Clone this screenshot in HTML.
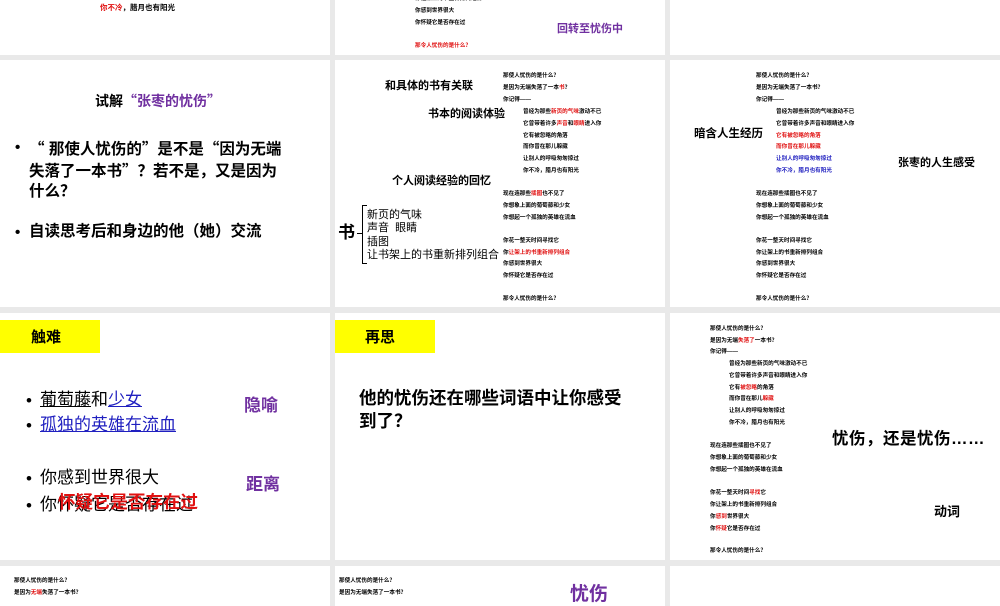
<!DOCTYPE html>
<html><head><meta charset="utf-8"><style>
*{margin:0;padding:0}
body{width:1000px;height:600px;background:#e9e9e9;position:relative;overflow:hidden;font-family:"Liberation Sans","Noto Sans CJK SC",sans-serif;font-weight:bold;color:#000}
.s{position:absolute;background:#fff;overflow:hidden}
.t{position:absolute;white-space:nowrap;line-height:1}
.sm{font-size:5.6px}
.r{color:#e01010}.p{color:#7030a0}.b{color:#2020c0}
.y{position:absolute;background:#ffff00}
.q{font-family:"Noto Sans CJK SC",sans-serif}
</style></head><body>
<!-- row1 -->
<div class="s" style="left:0;top:0;width:330px;height:55px">
<div class="t" style="left:100px;top:4px;font-size:7.5px"><span class="r">你不冷</span>，腊月也有阳光</div>
</div>
<div class="s" style="left:335px;top:0;width:330px;height:55px">
<div class="t sm" style="left:80px;top:-3px">你让架上的书重新排列组合</div>
<div class="t sm" style="left:80px;top:9px">你感到世界很大</div>
<div class="t sm" style="left:80px;top:21px">你怀疑它是否存在过</div>
<div class="t sm r" style="left:80px;top:44px">那令人忧伤的是什么？</div>
<div class="t p" style="left:222px;top:24px;font-size:11px">回转至忧伤中</div>
</div>
<div class="s" style="left:670px;top:0;width:330px;height:55px"></div>

<!-- row2 -->
<div class="s" style="left:0;top:60px;width:330px;height:247px">
<div class="t" style="left:95px;top:34px;font-size:14px">试解<span class="p"><span class="q">“</span>张枣的忧伤<span class="q">”</span></span></div>
<div class="t" style="left:15px;top:80px;font-size:15px">•</div>
<div class="t" style="left:29px;top:78px;font-size:15.5px;line-height:20px"><span class="q">“</span> 那使人忧伤的<span class="q">”</span>是不是<span class="q">“</span>因为无端<br>失落了一本书<span class="q">”</span>？若不是，又是因为<br>什么？</div>
<div class="t" style="left:15px;top:165px;font-size:15px">•</div>
<div class="t" style="left:29px;top:164px;font-size:15.5px">自读思考后和身边的他（她）交流</div>
</div>
<div class="s" style="left:335px;top:60px;width:330px;height:247px">
<div class="t" style="left:50px;top:21px;font-size:11px">和具体的书有关联</div>
<div class="t" style="left:93px;top:49px;font-size:11px">书本的阅读体验</div>
<div class="t" style="left:57px;top:116px;font-size:11px">个人阅读经验的回忆</div>
<div class="t" style="left:3px;top:164px;font-size:17px">书</div>
<div style="position:absolute;left:27px;top:145px;width:4px;height:57px;border:1.2px solid #000;border-right:none"></div>
<div style="position:absolute;left:22px;top:173px;width:5px;border-top:1.2px solid #000"></div>
<div class="t" style="left:32px;top:149px;font-size:11px;font-weight:normal;line-height:13.3px">新页的气味<br>声音&nbsp;&nbsp;眼睛<br>插图<br>让书架上的书重新排列组合</div>
<div class="t sm" style="left:168px;top:14px">那使人忧伤的是什么？</div>
<div class="t sm" style="left:168px;top:26px">是因为无端失落了一本<span class="r">书</span>？</div>
<div class="t sm" style="left:168px;top:38px">你记得——</div>
<div class="t sm" style="left:188px;top:50px">曾经为那些<span class="r">新页的气味</span>激动不已</div>
<div class="t sm" style="left:188px;top:62px">它曾带着许多<span class="r">声音</span>和<span class="r">眼睛</span>进入你</div>
<div class="t sm" style="left:188px;top:74px">它有被忽略的角落</div>
<div class="t sm" style="left:188px;top:85px">而你曾在那儿躲藏</div>
<div class="t sm" style="left:188px;top:97px">让别人的呼吸匆匆掠过</div>
<div class="t sm" style="left:188px;top:109px">你不冷，腊月也有阳光</div>
<div class="t sm" style="left:168px;top:132px">现在连那些<span class="r">插图</span>也不见了</div>
<div class="t sm" style="left:168px;top:144px">你想象上面的葡萄藤和少女</div>
<div class="t sm" style="left:168px;top:156px">你想起一个孤独的英雄在流血</div>
<div class="t sm" style="left:168px;top:179px">你花一整天时间寻找它</div>
<div class="t sm" style="left:168px;top:191px">你<span class="r">让架上的书重新排列组合</span></div>
<div class="t sm" style="left:168px;top:202px">你感到世界很大</div>
<div class="t sm" style="left:168px;top:214px">你怀疑它是否存在过</div>
<div class="t sm" style="left:168px;top:237px">那令人忧伤的是什么？</div>
</div>
<div class="s" style="left:670px;top:60px;width:330px;height:247px">
<div class="t" style="left:24px;top:69px;font-size:11.5px">暗含人生经历</div>
<div class="t" style="left:228px;top:98px;font-size:11px">张枣的人生感受</div>
<div class="t sm" style="left:86px;top:14px">那使人忧伤的是什么？</div>
<div class="t sm" style="left:86px;top:26px">是因为无端失落了一本书？</div>
<div class="t sm" style="left:86px;top:38px">你记得——</div>
<div class="t sm" style="left:106px;top:50px">曾经为那些新页的气味激动不已</div>
<div class="t sm" style="left:106px;top:62px">它曾带着许多声音和眼睛进入你</div>
<div class="t sm r" style="left:106px;top:74px">它有被忽略的角落</div>
<div class="t sm r" style="left:106px;top:85px">而你曾在那儿躲藏</div>
<div class="t sm b" style="left:106px;top:97px">让别人的呼吸匆匆掠过</div>
<div class="t sm b" style="left:106px;top:109px">你不冷，腊月也有阳光</div>
<div class="t sm" style="left:86px;top:132px">现在连那些插图也不见了</div>
<div class="t sm" style="left:86px;top:144px">你想象上面的葡萄藤和少女</div>
<div class="t sm" style="left:86px;top:156px">你想起一个孤独的英雄在流血</div>
<div class="t sm" style="left:86px;top:179px">你花一整天时间寻找它</div>
<div class="t sm" style="left:86px;top:191px">你让架上的书重新排列组合</div>
<div class="t sm" style="left:86px;top:202px">你感到世界很大</div>
<div class="t sm" style="left:86px;top:214px">你怀疑它是否存在过</div>
<div class="t sm" style="left:86px;top:237px">那令人忧伤的是什么？</div>
</div>

<!-- row3 -->
<div class="s" style="left:0;top:313px;width:330px;height:247px">
<div class="y" style="left:0;top:7px;width:100px;height:33px"></div>
<div class="t" style="left:31px;top:17px;font-size:15px">触难</div>
<div class="t" style="left:26px;top:75px;font-size:17px;font-weight:normal;line-height:25px">•<br>•</div>
<div class="t" style="left:40px;top:74px;font-size:17px;line-height:25px;font-weight:normal"><u>葡萄藤</u>和<u class="b">少女</u><br><u class="b">孤独的英雄在流血</u></div>
<div class="t" style="left:26px;top:152px;font-size:17px;font-weight:normal;line-height:27px">•<br>•</div>
<div class="t" style="left:40px;top:151px;font-size:17px;line-height:27px;font-weight:normal">你感到世界很大<br>你怀疑它是否存在过</div>
<div class="t r" style="left:58px;top:181px;font-size:17.5px">怀疑它是否存在过</div>
<div class="t p" style="left:244px;top:84px;font-size:17px">隐喻</div>
<div class="t p" style="left:246px;top:163px;font-size:17px">距离</div>
</div>
<div class="s" style="left:335px;top:313px;width:330px;height:247px">
<div class="y" style="left:0;top:7px;width:100px;height:33px"></div>
<div class="t" style="left:30px;top:17px;font-size:15px">再思</div>
<div class="t" style="left:24px;top:74px;font-size:17.5px;line-height:23px">他的忧伤还在哪些词语中让你感受<br>到了？</div>
</div>
<div class="s" style="left:670px;top:313px;width:330px;height:247px">
<div class="t" style="left:162px;top:118px;font-size:16.5px;letter-spacing:0.5px">忧伤，还是忧伤……</div>
<div class="t" style="left:264px;top:192px;font-size:13px">动词</div>
<div class="t sm" style="left:40px;top:14px">那使人忧伤的是什么？</div>
<div class="t sm" style="left:40px;top:26px">是因为无端<span class="r">失落了</span>一本书？</div>
<div class="t sm" style="left:40px;top:37px">你记得——</div>
<div class="t sm" style="left:59px;top:49px">曾经为那些新页的气味激动不已</div>
<div class="t sm" style="left:59px;top:61px">它曾带着许多声音和眼睛进入你</div>
<div class="t sm" style="left:59px;top:73px">它有<span class="r">被忽略</span>的角落</div>
<div class="t sm" style="left:59px;top:84px">而你曾在那儿<span class="r">躲藏</span></div>
<div class="t sm" style="left:59px;top:96px">让别人的呼吸匆匆掠过</div>
<div class="t sm" style="left:59px;top:108px">你不冷，腊月也有阳光</div>
<div class="t sm" style="left:40px;top:131px">现在连那些插图也不见了</div>
<div class="t sm" style="left:40px;top:143px">你想象上面的葡萄藤和少女</div>
<div class="t sm" style="left:40px;top:155px">你想起一个孤独的英雄在流血</div>
<div class="t sm" style="left:40px;top:178px">你花一整天时间<span class="r">寻找</span>它</div>
<div class="t sm" style="left:40px;top:190px">你让架上的书重新排列组合</div>
<div class="t sm" style="left:40px;top:202px">你<span class="r">感到</span>世界很大</div>
<div class="t sm" style="left:40px;top:214px">你<span class="r">怀疑</span>它是否存在过</div>
<div class="t sm" style="left:40px;top:236px">那令人忧伤的是什么？</div>
</div>

<!-- row4 -->
<div class="s" style="left:0;top:566px;width:330px;height:40px">
<div class="t sm" style="left:14px;top:13px">那使人忧伤的是什么？</div>
<div class="t sm" style="left:14px;top:25px">是因为<span class="r">无端</span>失落了一本书？</div>
</div>
<div class="s" style="left:335px;top:566px;width:330px;height:40px">
<div class="t sm" style="left:4px;top:13px">那使人忧伤的是什么？</div>
<div class="t sm" style="left:4px;top:25px">是因为无端失落了一本书？</div>
<div class="t p" style="left:235px;top:19px;font-size:19px">忧伤</div>
</div>
<div class="s" style="left:670px;top:566px;width:330px;height:40px"></div>
</body></html>
